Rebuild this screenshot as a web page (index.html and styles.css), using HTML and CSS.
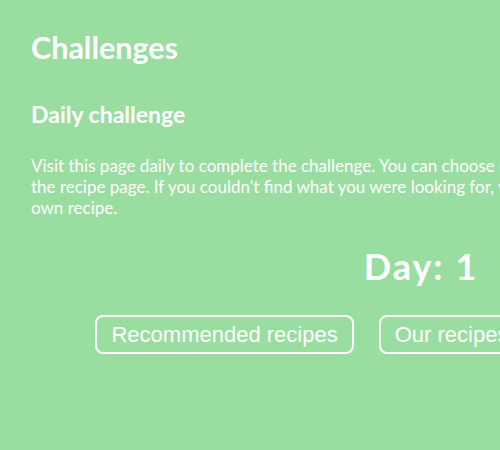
FILE: index.html
```html
<!DOCTYPE html>
<html>
<head>
<meta charset="utf-8">
<link rel="stylesheet" href="styles.css">
</head>
<body>
<main class="page">
  <h1 class="title">Challenges</h1>
  <h2 class="subtitle">Daily challenge</h2>
  <p class="intro">Visit this page daily to complete the challenge. You can choose one of the recommended recipes or find another one on<br>the recipe page. If you couldn't find what you were looking for, you can always add your<br>own recipe.</p>
  <div class="day">Day: 1</div>
  <div class="actions">
    <button class="btn">Recommended recipes</button>
    <button class="btn">Our recipes</button>
    <button class="btn">Add your recipes</button>
  </div>
</main>
</body>
</html>
```

FILE: styles.css
```css
html, body {
  margin: 0;
  padding: 0;
  overflow: hidden;
  background: #99dda0;
}
.page {
  width: 780px;
  padding: 0 31px;
  color: #ffffff;
  font-family: Lato, "Open Sans", sans-serif;
}
.title {
  margin: 0;
  padding-top: 28px;
  font-size: 30.5px;
  line-height: 38px;
  font-weight: 700;
}
.subtitle {
  margin: 0;
  padding-top: 34px;
  font-size: 23px;
  line-height: 28px;
  font-weight: 700;
}
.intro {
  margin: 0;
  padding-top: 27px;
  font-size: 17px;
  line-height: 21px;
  white-space: nowrap;
}
.day {
  margin-top: 26px;
  text-align: center;
  font-size: 36px;
  line-height: 44px;
  font-weight: 700;
  letter-spacing: 2px;
}
.actions {
  margin-top: 27px;
  display: flex;
  justify-content: center;
  gap: 25px;
}
.btn {
  background: transparent;
  border: 2px solid #ffffff;
  border-radius: 8px;
  color: #ffffff;
  font-family: "Liberation Sans", Arial, sans-serif;
  font-size: 22px;
  height: 39px;
  padding: 0 14px;
  white-space: nowrap;
}
```
